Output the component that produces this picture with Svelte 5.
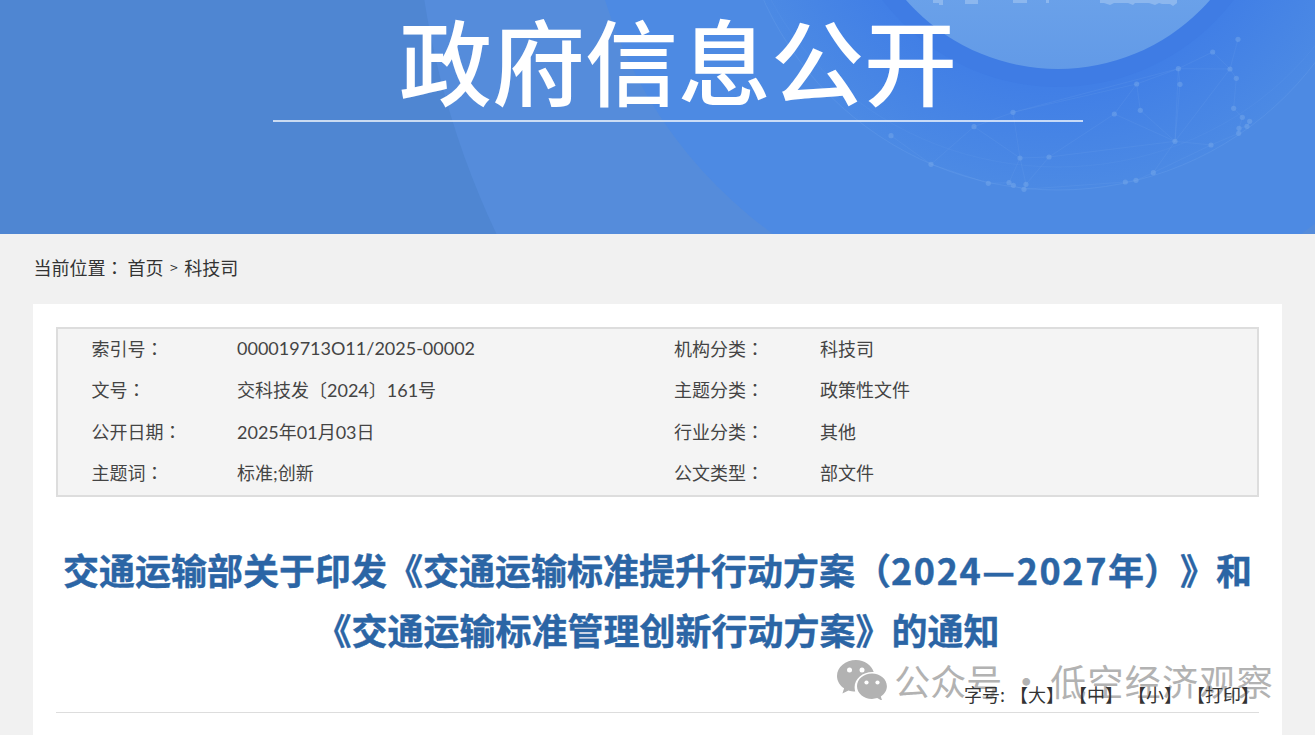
<script>
  const metaRows = [
    ['索引号', '000019713O11/2025-00002', '机构分类', '科技司'],
    ['文号', '交科技发〔2024〕161号', '主题分类', '政策性文件'],
    ['公开日期', '2025年01月03日', '行业分类', '其他'],
    ['主题词', '标准;创新', '公文类型', '部文件']
  ];

  const sizes = ['【大】', '【中】', '【小】', '【打印】'];

  // network dots on the banner globe, read off the reference
  const dots = [
    [1074,118],[998,156],[895,206],[1050,207],[1069,235],[900,253],[770,252],[1061,325],
    [781,331],[703,342],[399,337],[1087,352],[1109,364],[1101,379],[1077,385],[1076,400],
    [282,380],[33,407],[885,424],[993,435],[420,474],[507,471],[153,493],[820,518],
    [768,541],[736,546],[325,550],[387,548],[400,556],[438,553],[432,568]
  ].map(([x, y]) => [880 + x / 3, y / 3]);

  const links = [
    [0,3],[1,3],[2,3],[3,4],[3,18],[4,7],[2,5],[5,18],[2,6],[6,9],[6,8],[8,18],[9,18],[9,21],
    [2,18],[18,19],[18,21],[19,15],[7,11],[11,14],[12,13],[13,14],[14,15],[19,23],[23,24],[24,25],
    [10,16],[10,20],[16,20],[16,22],[17,22],[20,21],[20,29],[21,29],[20,27],[26,27],[27,28],[28,30],
    [29,30],[22,26],[10,2],[6,10],[1,2],[25,30],[23,18]
  ];
</script>

<div class="page">
  <header class="banner">
    <svg class="banner-bg" width="1315" height="234" viewBox="0 0 1315 234" aria-hidden="true">
      <defs>
        <linearGradient id="moon" x1="0" y1="0.65" x2="0" y2="1">
          <stop offset="0" stop-color="#72a8ec" />
          <stop offset="1" stop-color="#629ae7" />
        </linearGradient>
        <radialGradient id="globe" gradientUnits="userSpaceOnUse" cx="1058" cy="-133" r="325">
          <stop offset="0.68" stop-color="#417fe6" />
          <stop offset="1" stop-color="#4c8ae4" />
        </radialGradient>
      </defs>
      <rect width="1315" height="234" fill="#4f86d2" />
      <circle cx="1272" cy="-133" r="858" fill="#558cdb" />
      <circle cx="1037" cy="-133" r="452" fill="#4d8ae3" />
      <circle cx="1058" cy="-133" r="323" fill="url(#globe)" />
      <circle cx="1058" cy="-133" r="323" fill="none" stroke="#6ea3ea" stroke-opacity="0.3" />
      <ellipse cx="1058" cy="-133" rx="320" ry="300" fill="none" stroke="#6ea3ea" stroke-opacity="0.15" />
      <g stroke="#74a6ec" stroke-opacity="0.16" stroke-width="1" fill="none">
        {#each links as [a, b]}
          <line x1={dots[a][0]} y1={dots[a][1]} x2={dots[b][0]} y2={dots[b][1]} />
        {/each}
      </g>
      <g fill="#7aaaec" fill-opacity="0.45">
        {#each dots as [x, y]}
          <circle cx={x} cy={y} r="2.6" />
        {/each}
      </g>
      <circle cx="1058" cy="-134" r="221" fill="#3f7ce4" />
      <circle cx="1058" cy="-133" r="202" fill="url(#moon)" />
      <path d="M933 0h10v5h-4v-2h-6zM965 0h13v4h-13zM1013 0h14v3h-14zM1046 0h3v3h-3zM1100 0h77v3l-4 3-3-2h-8l-3-1-4 2-6-2h-14l-2 2-5-2h-14l-4 2-6-2h-4z" fill="#a4c6f2" fill-opacity="0.6" />
    </svg>
    <div class="banner-title">
      <h2>政府信息公开</h2>
    </div>
  </header>

  <div class="crumb">
    <span>当前位置<span class="colon">：</span></span>
    <span class="crumb-link">首页</span>
    <span class="crumb-sep">&gt;</span>
    <span>科技司</span>
  </div>

  <main class="card">
    <div class="meta">
      {#each metaRows as row}
        <div class="meta-row">
          <span>{row[0]}<span class="colon">：</span></span>
          <span class="value">{row[1]}</span>
          <span>{row[2]}<span class="colon">：</span></span>
          <span>{row[3]}</span>
        </div>
      {/each}
    </div>

    <h1>交通运输部关于印发《交通运输标准提升行动方案（<span class="years">2024—2027</span>年）》和<br />《交通运输标准管理创新行动方案》的通知</h1>

    <div class="tools-wrap">
      <div class="watermark">
        <svg width="50" height="40" viewBox="0 0 50 40" aria-hidden="true">
          <path d="M19 0C8.500 0 0 7.100 0 15.900c0 5 2.800 9.500 7.100 12.400L5.400 33.600l6.100-3.200c2 .6 4.500 1 6.700 1-.4-1.400-.6-2.800-.6-4.200 0-8.500 8-15.300 17.800-15.300h1.300C34.600 5.200 27.500 0 19 0z" fill="#b2b2b2" />
          <circle cx="12.500" cy="10" r="2.500" fill="#fff" />
          <circle cx="25" cy="10" r="2.500" fill="#fff" />
          <path d="M35 13.500c-8.300 0-15 5.700-15 12.700S26.700 38.900 35 38.900c1.800 0 3.600-.3 5.200-.8l5 2.700-1.400-4.300c3.700-2.400 6.100-6 6.100-10.300 0-7-6.700-12.700-14.900-12.700z" fill="#b2b2b2" />
          <circle cx="29.500" cy="22.500" r="2.100" fill="#fff" />
          <circle cx="40.500" cy="22.500" r="2.100" fill="#fff" />
        </svg>
        <span>公众号</span><span class="wm-dot">·</span><span class="wm-name">低空经济观察</span>
      </div>
      <div class="tools">
        <span class="tools-label">字号:</span>
        {#each sizes as size}
          <span class="tool">{size}</span>
        {/each}
      </div>
    </div>
  </main>
</div>

<style>
  :global(body) {
    margin: 0;
    overflow: hidden;
    background: #f1f1f1;
  }

  .page {
    font-family: "Noto Sans CJK SC", "Liberation Sans", sans-serif;
    text-spacing-trim: space-all;
    height: 735px;
    overflow: hidden;
  }

  .colon {
    font-family: "Noto Sans CJK TC", sans-serif;
  }

  .banner {
    position: relative;
    height: 234px;
    overflow: hidden;
  }

  .banner-bg {
    position: absolute;
    left: 0;
    top: 0;
    display: block;
  }

  .banner-title {
    position: relative;
    width: 810px;
    margin-left: 273px;
    border-bottom: 2px solid rgba(255, 255, 255, 0.7);
    height: 120px;
    text-align: center;
  }

  .banner-title h2 {
    margin: 0;
    color: #fff;
    font-size: 93px;
    font-weight: 500;
    line-height: 118px;
    white-space: nowrap;
  }

  .crumb {
    display: flex;
    align-items: center;
    height: 66px;
    margin-bottom: 4px;
    padding-left: 33.500px;
    font-size: 18px;
    color: #333;
  }

  .crumb-link {
    margin-left: 4px;
  }

  .crumb-sep {
    margin: 0 6.500px;
    font-size: 14px;
  }

  .card {
    margin: 0 33px;
    height: 431px;
    padding: 23px 23px 0;
    background: #fff;
  }

  .meta {
    display: flex;
    flex-direction: column;
    height: 170px;
    box-sizing: border-box;
    border: 2px solid #ddd;
    background: #f4f4f4;
    font-size: 18px;
    color: #444;
  }

  .meta-row {
    display: grid;
    grid-template-columns: 145.500px 437px 146px 1fr;
    align-items: center;
    height: 41.300px;
    box-sizing: border-box;
    padding: 0 0 3px 33.500px;
    white-space: nowrap;
  }

  .value {
    font-family: Lato, "Noto Sans CJK SC", sans-serif;
  }

  h1 {
    margin: 42px 0 0;
    color: #2b65a5;
    font-size: 36px;
    font-weight: 700;
    line-height: 60px;
    text-align: center;
    white-space: nowrap;
    -webkit-text-stroke: 0.400px #2b65a5;
  }

  .years {
    letter-spacing: 1.600px;
  }

  .tools-wrap {
    position: relative;
    margin-top: 6px;
    height: 48px;
    box-sizing: border-box;
    border-bottom: 1px solid #ddd;
  }

  .watermark {
    position: absolute;
    right: -15px;
    top: -5px;
    display: flex;
    align-items: center;
    color: #b2b2b2;
    font-size: 36px;
    line-height: 40px;
    white-space: nowrap;
  }

  .watermark svg {
    margin-right: 7px;
  }

  .wm-dot {
    width: 48px;
    text-align: center;
  }

  .wm-name {
    letter-spacing: 1.300px;
  }

  .tools {
    position: relative;
    display: flex;
    justify-content: flex-end;
    align-items: center;
    gap: 5px;
    height: 47px;
    padding: 10px 0 0;
    box-sizing: border-box;
    font-size: 18px;
    color: #333;
    white-space: nowrap;
  }
</style>
